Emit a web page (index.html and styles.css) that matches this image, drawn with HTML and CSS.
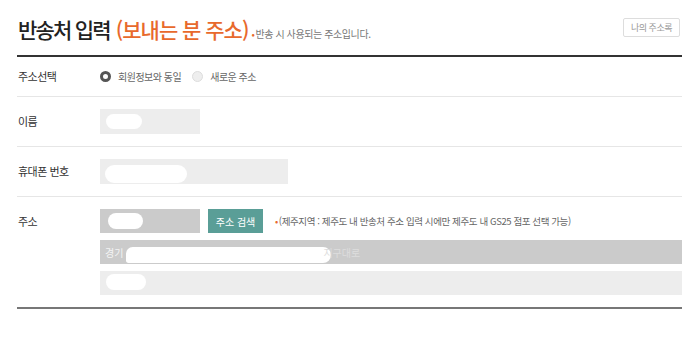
FILE: index.html
```html
<!DOCTYPE html><html lang="ko"><head><meta charset="utf-8">
<title>반송처 입력</title>
<link rel="stylesheet" href="styles.css">
</head><body>

<div class="wrap">
	<div class="head">
		<h2 class="title">반송처 입력 <em>(보내는 분 주소)</em><span class="note"><i>•</i>반송 시 사용되는 주소입니다.</span></h2>
		<button class="btn-book">나의 주소록</button>
	</div>

	<div class="form">
		<div class="row">
			<div class="label">주소선택</div>
			<div class="field radios">
				<label class="radio on"><span class="dot"></span>회원정보와 동일</label>
				<label class="radio"><span class="dot"></span>새로운 주소</label>
			</div>
		</div>
		<div class="row">
			<div class="label">이름</div>
			<div class="field">
				<div class="box tall w100"><span class="blob b-name"></span></div>
			</div>
		</div>
		<div class="row">
			<div class="label">휴대폰 번호</div>
			<div class="field">
				<div class="box tall w188"><span class="blob b-phone"></span></div>
			</div>
		</div>
		<div class="row">
			<div class="label">주소</div>
			<div class="field stack">
				<div class="line">
					<div class="box dark w100"><span class="blob b-zip"></span></div>
					<button class="btn-search">주소 검색</button>
					<span class="hint"><i>•</i>(제주지역 : 제주도 내 반송처 주소 입력 시에만 제주도 내 GS25 점포 선택 가능)</span>
				</div>
				<div class="box dark full"><span class="txt">경기</span><span class="blob b-addr"></span><span class="txt faint">지구대로</span></div>
				<div class="box full"><span class="blob b-detail"></span></div>
			</div>
		</div>
	</div>
</div>

</body></html>
```

FILE: styles.css
```css
body {
	margin: 0;
	font-family: "Noto Sans CJK KR", "Noto Sans", sans-serif;
	color: #333;
	background: #fff;
}
.wrap {
	width: 665px;
	margin-left: 17px;
}
.head {
	display: flex;
	justify-content: space-between;
	align-items: center;
	height: 55px;
	border-bottom: 2px solid #333;
}
.title {
	margin: 2px 0 0 1px;
	font-size: 21px;
	font-weight: 500;
	color: #222;
	letter-spacing: -1.8px;
}
.title em {
	margin-left: 2px;
	font-style: normal;
	color: #e8692c;
	letter-spacing: -1px;
}
.note {
	margin-left: 3px;
	font-size: 10px;
	font-weight: 400;
	color: #777;
	letter-spacing: -.4px;
}
.note i, .hint i {
	font-style: normal;
	color: #e8692c;
	margin-right: 1px;
}
.btn-book {
	margin-right: 2px;
	margin-top: 0;
	width: 57px;
	height: 19px;
	padding: 0;
	border: 1px solid #ddd;
	border-radius: 2px;
	background: #fff;
	color: #999;
	font-family: inherit;
	font-size: 9px;
	letter-spacing: -.5px;
}
.form {
	border-bottom: 2px solid #777;
}
.row {
	display: flex;
	padding: 12px 0;
	border-bottom: 1px solid #e6e6e6;
}
.row:last-child {
	border-bottom: none;
}
.label {
	width: 82px;
	padding-left: 1px;
	font-size: 11px;
	line-height: 24px;
	color: #333;
	letter-spacing: -.5px;
}
.row:first-child .label {
	line-height: 15px;
}
.field {
	flex: 1;
}
.radios {
	display: flex;
	align-items: center;
	gap: 11px;
	height: 15px;
}
.radio {
	display: flex;
	align-items: center;
	gap: 7px;
	font-size: 10px;
	color: #666;
	letter-spacing: -.5px;
}
.dot {
	width: 11px;
	height: 11px;
	box-sizing: border-box;
	border-radius: 50%;
	border: 1px solid #ddd;
	background: #eee;
}
.radio.on .dot {
	border: 3px solid #555;
	background: #fff;
}
.stack {
	display: flex;
	flex-direction: column;
	gap: 7px;
}
.line {
	display: flex;
	align-items: center;
}
.box {
	display: flex;
	align-items: center;
	height: 24px;
	padding-left: 5px;
	box-sizing: border-box;
	background: #ededed;
	overflow: hidden;
}
.box.tall {
	height: 25px;
}
.box.dark {
	background: #cbcbcb;
}
.w100 { width: 100px; }
.w188 { width: 188px; }
.full { width: 582px; }
.blob {
	display: block;
	background: #fff;
	border-radius: 9px;
}
.b-name { width: 36px; height: 15px; margin-left: 1px; }
.b-phone { width: 82px; height: 18px; border-radius: 10px; margin-top: 4px; }
.b-zip { width: 35px; height: 16px; margin-left: 3px; }
.b-addr { width: 205px; height: 16px; margin-left: 3px; margin-top: 6px; border-radius: 10px 12px 12px 4px; }
.b-detail { width: 40px; height: 16px; margin-left: 1px; margin-top: -2px; }
.txt {
	font-size: 10px;
	color: #f4f4f4;
}
.txt.faint {
	margin-left: -8px;
	color: #ddd;
}
.btn-search {
	margin-left: 8px;
	width: 55px;
	height: 24px;
	padding: 0;
	border: none;
	background: #5a9e97;
	color: #fff;
	font-family: inherit;
	font-size: 10px;
}
.hint {
	margin-left: 12px;
	font-size: 9.5px;
	color: #666;
	letter-spacing: -.4px;
}
```
